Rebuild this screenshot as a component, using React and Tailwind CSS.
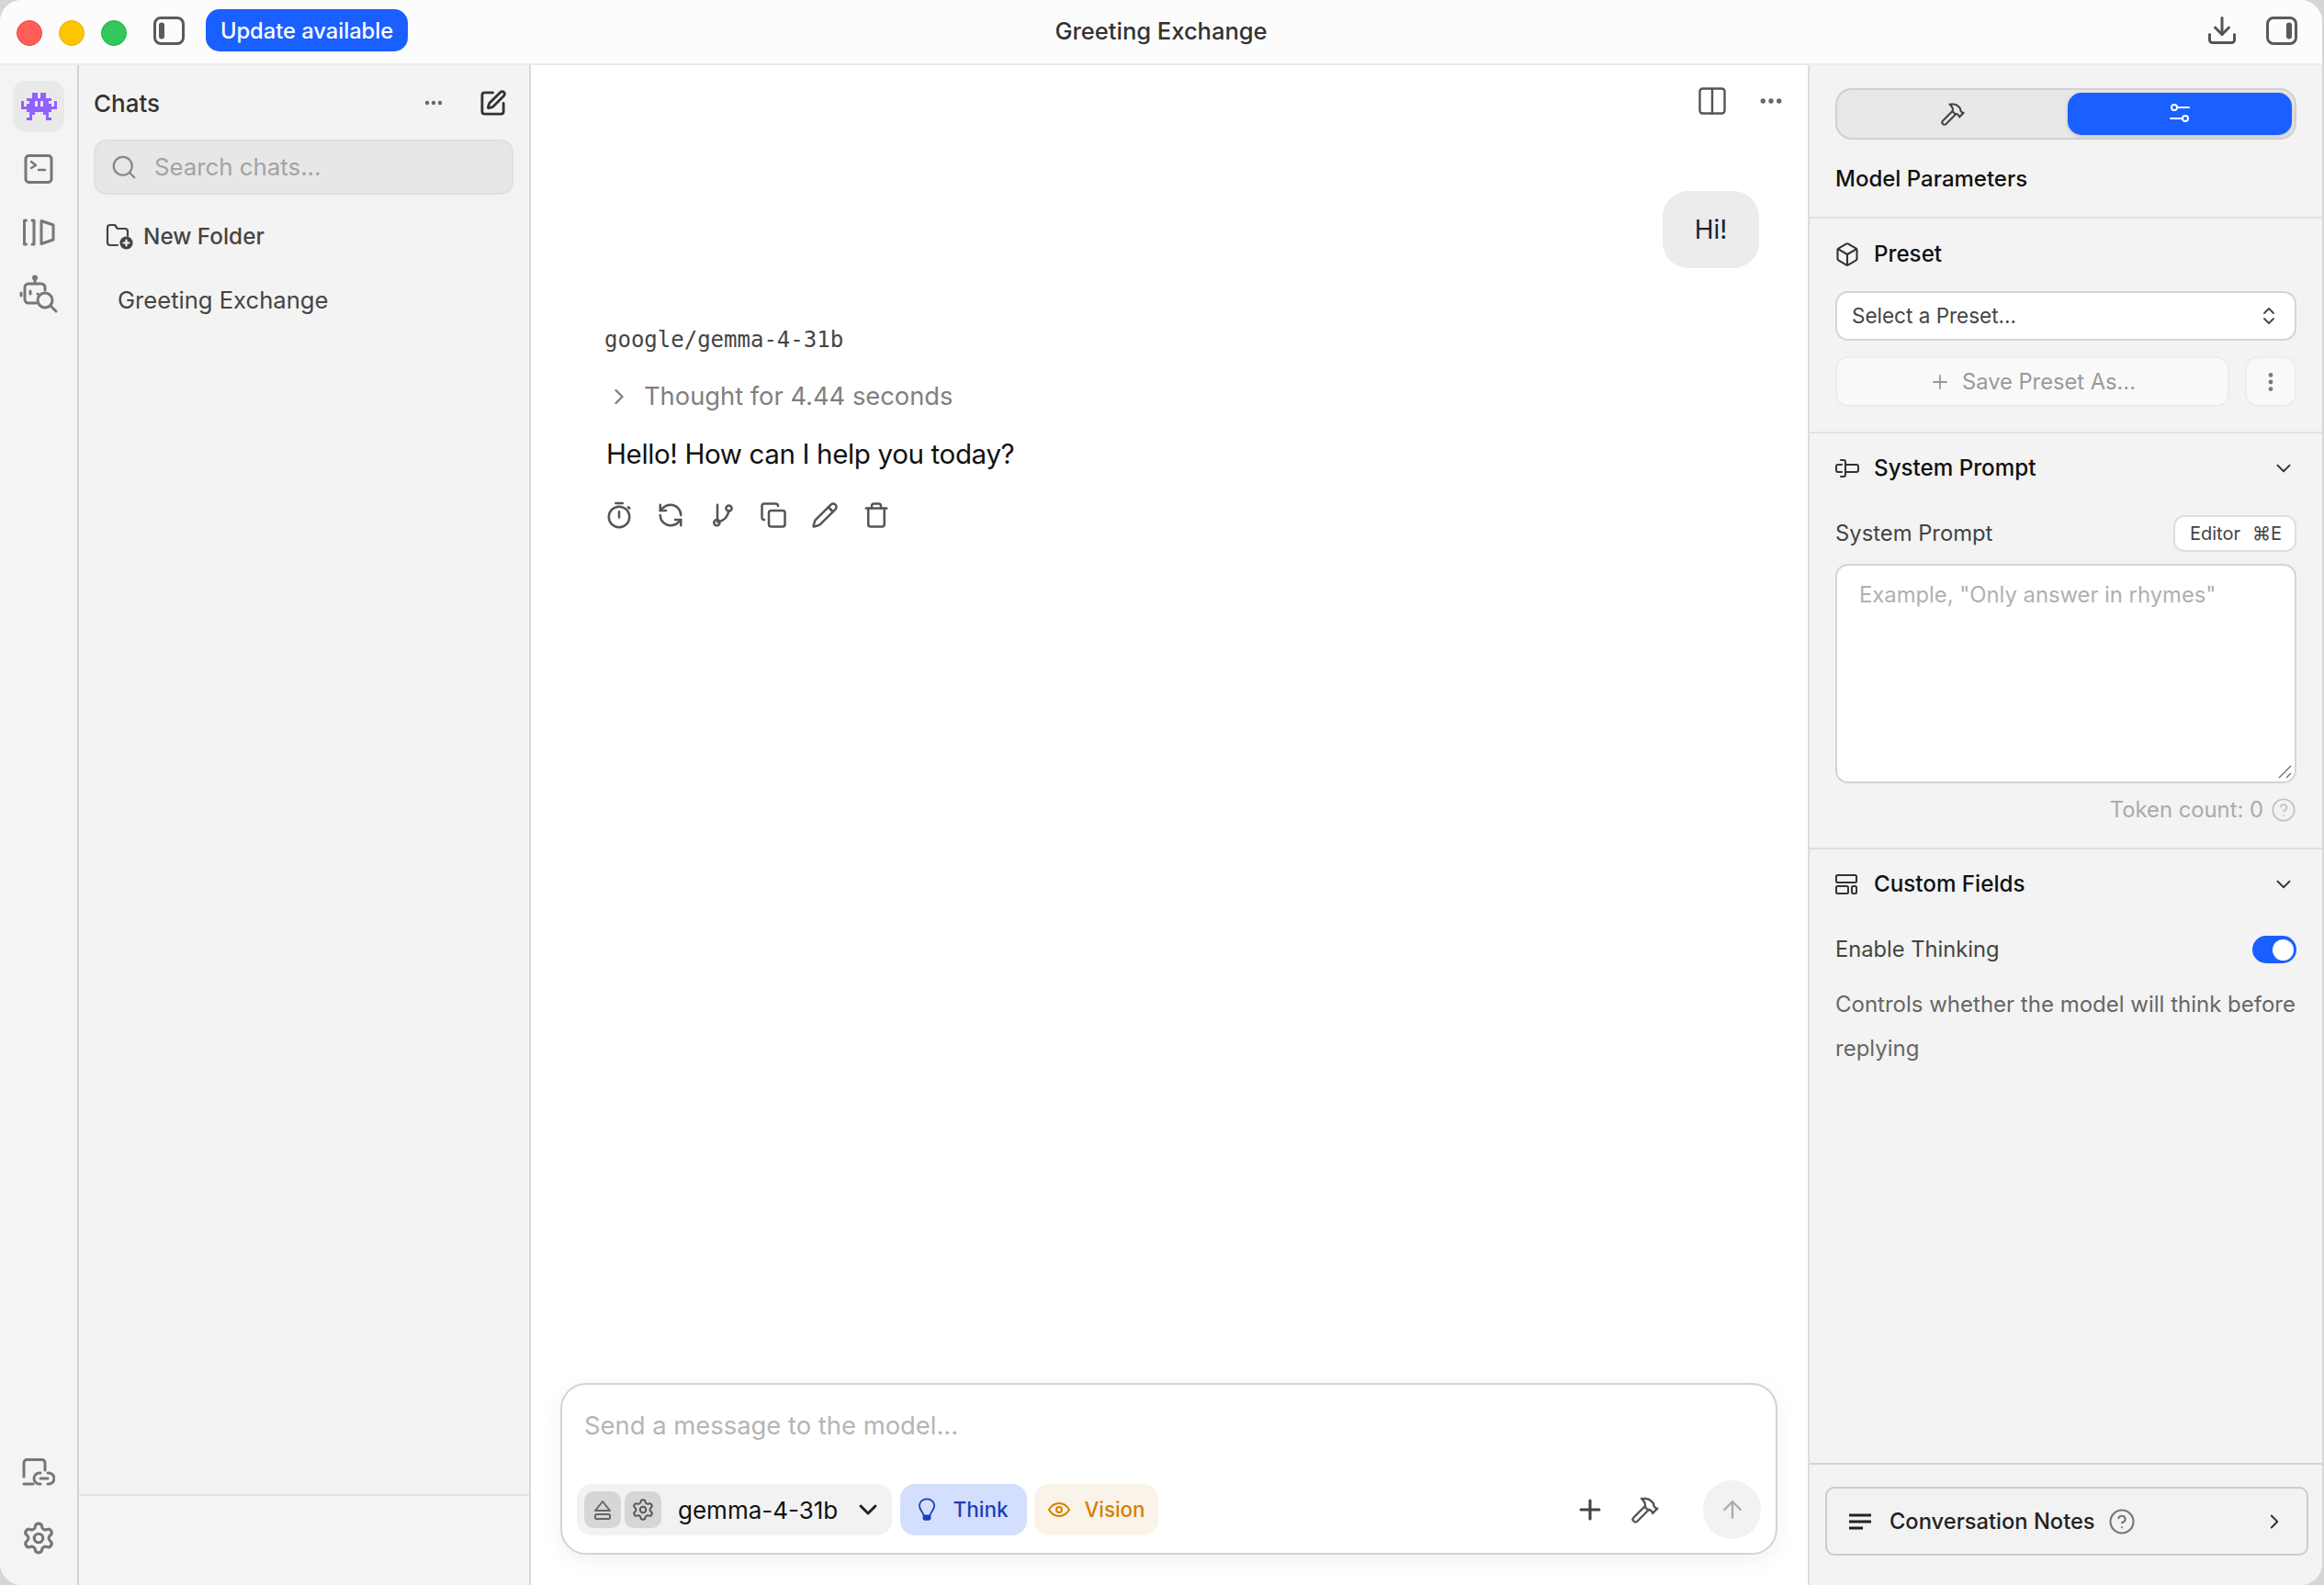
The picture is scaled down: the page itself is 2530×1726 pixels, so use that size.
import React from "react";
import { Search, SquarePen, Ellipsis, RefreshCcw, Copy, Pencil, Trash, ChevronRight, ChevronDown, ChevronsUpDown, Plus, EllipsisVertical, Hammer, Box, ArrowUp, CircleHelp, Download, Columns2, Settings } from "lucide-react";

const invader = [
  "....XX.XX....",
  "....XX.XX....",
  "..XXXXXXXXX..",
  "X..XX.X.XX..X",
  "X.XXX.X.XXX.X",
  "XXXXXXXXXXXXX",
  "..XXXXXXXXX..",
  "...XX...XX...",
  "...X.....X...",
  "..XX.....XX..",
];
const Invader = () => (
  <svg width="39" height="30" viewBox="0 0 13 10" fill="#9061ff" shapeRendering="crispEdges">
    {invader.flatMap((r, y) => [...r].map((c, x) => (c === "X" ? <rect key={x + "-" + y} x={x} y={y} width="1" height="1" /> : null)))}
  </svg>
);

const PanelToggle = ({ right }) => (
  <svg width="34" height="31" viewBox="0 0 34 31" fill="none" className="shrink-0">
    <rect x="1.5" y="1.5" width="31" height="28" rx="6.5" stroke="#5a5a5a" strokeWidth="3" />
    <rect x={right ? 22 : 6} y="6.5" width="6" height="18" rx="3" fill="#5a5a5a" />
  </svg>
);

const Section = ({ icon, title, chevron }) => (
  <div className="flex items-center h-[32px]">
    <span className="w-[42px] flex items-center text-[#333]">{icon}</span>
    <span className="text-[24.2px] font-medium text-[#111]">{title}</span>
    {chevron && <ChevronDown size={26} strokeWidth={1.7} className="ml-auto mr-[1px] text-[#333]" />}
  </div>
);

export default function App() {
  return (
    <div className="w-[2530px] h-[1726px] bg-[#d6d6d4] overflow-hidden font-['Inter',sans-serif]">
      <div className="w-[2528px] h-[1726px] rounded-[24px] overflow-hidden flex flex-col bg-white">
        {/* Title bar */}
        <div className="h-[71px] shrink-0 grid grid-cols-[1fr_auto_1fr] items-center bg-[#fcfcfc] border-b-2 border-[#ebebeb]">
          <div className="flex items-center pl-[18px]">
            <span className="w-[28px] h-[28px] mt-[3px] rounded-full bg-[#ff5f57] border border-[#e5443e]" />
            <span className="w-[28px] h-[28px] mt-[3px] ml-[18px] rounded-full bg-[#fdc500] border border-[#e6b000]" />
            <span className="w-[28px] h-[28px] mt-[3px] ml-[18px] rounded-full bg-[#31c759] border border-[#20b046]" />
            <span className="ml-[29px] -mt-[3px] flex"><PanelToggle /></span>
            <button className="ml-[23px] -mt-[3px] w-[220px] h-[46px] pt-[1px] rounded-[15px] bg-[#1a5fff] text-white text-[23.7px] font-medium flex items-center justify-center">Update available</button>
          </div>
          <div className="text-[25.5px] font-medium text-[#333] -mt-[1px]">Greeting Exchange</div>
          <div className="flex items-center justify-end pr-[27px] -mt-[3px]">
            <Download size={36} strokeWidth={2} className="text-[#555]" />
            <span className="ml-[30px] flex"><PanelToggle right /></span>
          </div>
        </div>

        <div className="flex flex-1 min-h-0">
          {/* Rail */}
          <div className="w-[86px] shrink-0 bg-[#f4f4f4] border-r-2 border-[#d2d2d2] flex flex-col items-center">
            <div className="mt-[17px] w-[56px] h-[56px] rounded-[14px] bg-[#e9e9e9] flex items-center justify-center"><Invader /></div>
            <div className="mt-[23px] text-[#777]">
              <svg width="34" height="34" viewBox="0 0 34 34" fill="none" stroke="currentColor" strokeWidth="3" strokeLinecap="round" strokeLinejoin="round">
                <rect x="3" y="2.5" width="28" height="29" rx="3.5" />
                <path d="M9 9l5 4-5 3M17 18h7" strokeWidth="2.4" />
              </svg>
            </div>
            <div className="mt-[36px] text-[#777]">
              <svg width="36" height="32" viewBox="0 0 36 32" fill="none" stroke="currentColor" strokeWidth="3" strokeLinecap="round" strokeLinejoin="round">
                <path d="M4.500 3H2.500v26h2M11 3h2v26h-2M21 3.500l13 4.500v16l-13 4.500z" />
              </svg>
            </div>
            <div className="mt-[30px] text-[#777]">
              <svg width="42" height="42" viewBox="0 0 42 42" fill="none" stroke="currentColor" strokeWidth="3" strokeLinecap="round" strokeLinejoin="round">
                <path d="M17 9V4" />
                <circle cx="17" cy="3.5" r="1.5" fill="currentColor" />
                <path d="M18 31H10a4 4 0 0 1-4-4V14a4 4 0 0 1 4-4h14a4 4 0 0 1 4 4v3" />
                <path d="M2 20v3M12 18v3M20 21h0" />
                <circle cx="28" cy="28" r="8" />
                <path d="M34 34l6 6" />
              </svg>
            </div>
            <div className="mt-auto text-[#777]">
              <svg width="36" height="30" viewBox="0 0 36 30" fill="none" stroke="currentColor" strokeWidth="3" strokeLinecap="round" strokeLinejoin="round">
                <path d="M2 20V5a3.500 3.500 0 0 1 3.500-3.500h16A3.500 3.500 0 0 1 25 5v8M2 28h10" />
                <path d="M20 16h-1a6 6 0 0 0 0 12h1M28 16h1a6 6 0 0 1 0 12h-1M20 22h8" />
              </svg>
            </div>
            <div className="mt-[38px] mb-[32px]"><Settings size={38} strokeWidth={2} className="text-[#777]" /></div>
          </div>

          {/* Chats sidebar */}
          <div className="w-[492px] shrink-0 bg-[#f3f3f3] border-r-2 border-[#d8d8d8] flex flex-col">
            <div className="flex-1 min-h-0 pl-[16px] pr-[17px]">
              <div className="mt-[25px] flex items-center h-[32px]">
                <span className="text-[26px] font-medium text-[#333]">Chats</span>
                <Ellipsis size={24} strokeWidth={2.4} className="ml-auto mr-[-2px] text-[#666]" />
                <SquarePen size={31} strokeWidth={2.2} className="ml-[39px] mr-[7px] text-[#333]" />
              </div>
              <div className="mt-[24px] w-[457px] h-[60px] rounded-[14px] bg-[#e7e7e7] border-2 border-[#e0e0e0] flex items-center pl-[16px]">
                <Search size={30} strokeWidth={1.8} className="text-[#888]" />
                <span className="ml-[18px] text-[25.8px] text-[#a3a3a3]">Search chats...</span>
              </div>
              <div className="mt-[30px] ml-[13px] flex items-center h-[30px]">
                <svg width="30" height="30" viewBox="0 0 30 30" fill="none" stroke="#444" strokeWidth="2.2" strokeLinecap="round" strokeLinejoin="round" className="shrink-0">
                  <path d="M13 25H5a3 3 0 0 1-3-3V6a3 3 0 0 1 3-3h5l3 4h8a3 3 0 0 1 3 3v5" />
                  <circle cx="22.500" cy="22.500" r="6" fill="#444" stroke="#444" />
                  <path d="M22.500 19.500v6M19.500 22.500h6" stroke="#f3f3f3" />
                </svg>
                <span className="ml-[11px] text-[24.3px] font-medium text-[#444]">New Folder</span>
              </div>
              <div className="mt-[39px] ml-[26px] text-[25.6px] text-[#444] leading-[32px]">Greeting Exchange</div>
            </div>
            <div className="h-[99px] shrink-0 border-t-2 border-[#e4e4e4] bg-[#f5f5f5]" />
          </div>

          {/* Main */}
          <div className="flex-1 min-w-0 bg-white flex flex-col pl-[32px] pr-[33px]">
            <div className="mt-[21px] h-[36px] flex items-center justify-end -mr-[3px]">
              <Columns2 size={36} strokeWidth={1.6} className="text-[#555]" />
              <Ellipsis size={30} strokeWidth={2.3} className="ml-[31px] -mr-[5px] text-[#666]" />
            </div>
            <div className="mt-[80px] flex justify-end pr-[20px]">
              <div className="w-[105px] h-[84px] rounded-[28px] bg-[#ececec] flex items-center justify-center text-[28px] text-[#222]">Hi!</div>
            </div>
            <div className="mt-[60px] pl-[48px] font-['DejaVu_Sans_Mono',monospace] text-[24px] leading-[36px] text-[#444]">google/gemma-4-31b</div>
            <div className="mt-[26px] ml-[51px] flex items-center h-[36px] text-[#808080]">
              <ChevronRight size={28} strokeWidth={2} className="-ml-[1px] text-[#808080]" />
              <span className="ml-[13px] text-[27.3px]">Thought for 4.44 seconds</span>
            </div>
            <div className="mt-[26px] ml-[50px] text-[29.5px] tracking-[-0.35px] leading-[36px] text-[#111]">Hello! How can I help you today?</div>
            <div className="mt-[34px] ml-[49px] flex items-center text-[#555] gap-[26px]">
              <svg width="30" height="30" viewBox="0 0 24 24" fill="none" stroke="currentColor" strokeWidth="2" strokeLinecap="round" strokeLinejoin="round" className="shrink-0">
                <circle cx="12" cy="13.500" r="9" /><path d="M9 1.500h6M12 9v5M20 5l1 1" />
              </svg>
              <RefreshCcw size={30} strokeWidth={2} />
              <svg width="30" height="30" viewBox="0 0 24 24" fill="none" stroke="currentColor" strokeWidth="2" strokeLinecap="round" strokeLinejoin="round" className="shrink-0">
                <path d="M8 3v13M8 18c6-1 9-4 10-10" />
                <circle cx="7.500" cy="18.500" r="2.500" />
                <circle cx="18" cy="6" r="2.500" />
              </svg>
              <Copy size={30} strokeWidth={2} />
              <Pencil size={30} strokeWidth={2} />
              <Trash size={30} strokeWidth={2} />
            </div>
            <div className="mt-auto mb-[33px] h-[187px] rounded-[28px] border-2 border-[#d4d4d4] bg-white shadow-[0_6px_24px_rgba(0,0,0,0.06)] flex flex-col">
              <div className="mt-[26px] ml-[24px] text-[27.4px] leading-[36px] text-[#b5b5b5]">Send a message to the model...</div>
              <div className="mt-auto mb-[15px] flex items-center pl-[16px] pr-[16px]">
                <div className="w-[343px] h-[56px] rounded-[16px] bg-[#f2f2f2] flex items-center pl-[8px]">
                  <span className="w-[40px] h-[40px] rounded-[10px] bg-[#d6d6d6] flex items-center justify-center">
                    <svg width="24" height="24" viewBox="0 0 24 24" fill="none" stroke="#666" strokeWidth="2" strokeLinejoin="round"><path d="M12 3l8 10H4z" /><rect x="4" y="17" width="16" height="5" rx="1.500" /></svg>
                  </span>
                  <span className="ml-[4px] w-[40px] h-[40px] rounded-[10px] bg-[#d6d6d6] flex items-center justify-center"><Settings size={26} strokeWidth={1.8} className="text-[#555]" /></span>
                  <span className="ml-[18px] text-[26px] whitespace-nowrap text-[#111]">gemma-4-31b</span>
                  <ChevronDown size={32} strokeWidth={2.2} className="ml-auto mr-[10px] text-[#222]" />
                </div>
                <div className="ml-[9px] w-[138px] h-[56px] rounded-[16px] bg-[#d3dffc] flex items-center justify-center text-[#1a3fc0]">
                  <svg width="18" height="26" viewBox="0 0 20 28" fill="none" stroke="currentColor" strokeWidth="2" strokeLinecap="round" className="shrink-0">
                    <path d="M6 21c0-4-5-6-5-12a9 8 0 0 1 18 0c0 6-5 8-5 12z" />
                    <rect x="6" y="22" width="8" height="4" rx="2" fill="currentColor" />
                  </svg>
                  <span className="ml-[19px] text-[22.5px] font-medium">Think</span>
                </div>
                <div className="ml-[8px] w-[135px] h-[56px] rounded-[16px] bg-[#f9f3ea] flex items-center justify-center text-[#d68000]">
                  <svg width="24" height="18" viewBox="0 0 24 18" fill="none" stroke="currentColor" strokeWidth="2" className="shrink-0">
                    <path d="M1 9c3-5 7-7 11-7s8 2 11 7c-3 5-7 7-11 7S4 14 1 9z" />
                    <circle cx="12" cy="9" r="3" />
                  </svg>
                  <span className="ml-[16px] text-[22.3px] font-medium">Vision</span>
                </div>
                <Plus size={34} strokeWidth={2.2} className="ml-auto text-[#444]" />
                <Hammer size={32} strokeWidth={1.8} className="ml-[27px] text-[#555]" />
                <span className="ml-[47px] w-[63px] h-[64px] rounded-full bg-[#f2f2f2] flex items-center justify-center"><ArrowUp size={30} strokeWidth={1.8} className="text-[#aaa]" /></span>
              </div>
            </div>
          </div>

          {/* Right panel */}
          <div className="w-[560px] shrink-0 bg-[#f3f3f3] border-l-2 border-[#dcdcdc] flex flex-col">
            <div className="h-[167px] shrink-0 border-b-2 border-[#e2e2e2] px-[28px]">
              <div className="mt-[25px] h-[56px] rounded-[18px] bg-[#e8e8e8] border-2 border-[#d0d0d0] flex items-center pr-[3px]">
                <div className="flex-1 flex justify-center"><Hammer size={28} strokeWidth={1.8} className="text-[#444]" /></div>
                <div className="w-[244px] h-[46px] rounded-[15px] bg-[#1a5fff] shadow-[0_1px_4px_rgba(0,0,0,0.2)] flex items-center justify-center">
                  <svg width="24" height="24" viewBox="0 0 24 24" fill="none" stroke="white" strokeWidth="2" strokeLinecap="round"><circle cx="6" cy="5" r="3" /><path d="M10 5h12M2 17h12" /><circle cx="18" cy="17" r="3" /></svg>
                </div>
              </div>
              <div className="mt-[27px] text-[24px] font-medium text-[#111] leading-[32px]">Model Parameters</div>
            </div>
            <div className="h-[234px] shrink-0 border-b-2 border-[#e2e2e2] px-[28px] pt-[23px]">
              <Section title="Preset" icon={<Box size={28} strokeWidth={1.8} className="-ml-[1px]" />} />
              <div className="mt-[24px] h-[54px] rounded-[14px] bg-white border-2 border-[#d4d4d4] flex items-center pl-[16px] pr-[16px]">
                <span className="text-[22.5px] text-[#444]">Select a Preset...</span>
                <ChevronsUpDown size={24} strokeWidth={1.8} className="ml-auto text-[#444]" />
              </div>
              <div className="mt-[17px] flex gap-[17px]">
                <div className="flex-1 h-[55px] rounded-[14px] bg-[#f9f9f9] border-2 border-[#ececec] flex items-center justify-center text-[#999]">
                  <Plus size={24} strokeWidth={1.8} />
                  <span className="ml-[12px] text-[23.7px]">Save Preset As...</span>
                </div>
                <div className="w-[56px] h-[55px] rounded-[14px] bg-[#f9f9f9] border-2 border-[#ececec] flex items-center justify-center text-[#777]"><EllipsisVertical size={26} strokeWidth={2.4} /></div>
              </div>
            </div>
            <div className="h-[453px] shrink-0 border-b-2 border-[#dedede] px-[28px] pt-[22px]">
              <Section title="System Prompt" chevron icon={
                <svg width="26" height="22" viewBox="0 0 26 22" fill="none" stroke="currentColor" strokeWidth="2" strokeLinecap="round" strokeLinejoin="round">
                  <path d="M6 2h3M9 2c1 0 2 1 2 2v14c0 1-1 2-2 2H6M12 7h11a2 2 0 0 1 2 2v4a2 2 0 0 1-2 2H12M7 7H3a2 2 0 0 0-2 2v4a2 2 0 0 0 2 2h4" />
                </svg>} />
              <div className="mt-[35px] flex items-center justify-between h-[40px]">
                <span className="text-[23.8px] text-[#444]">System Prompt</span>
                <span className="w-[134px] h-[40px] rounded-[12px] bg-white border-2 border-[#dedede] flex items-center pl-[16px] text-[20px] text-[#444]">Editor<span className="ml-[13px]">⌘E</span></span>
              </div>
              <div className="mt-[13px] relative h-[239px] rounded-[14px] bg-white border-2 border-[#d4d4d4] pl-[24px] pt-[16px] text-[23.8px] leading-[32px] text-[#b0b0b0]">
                Example, "Only answer in rhymes"
                <svg width="16" height="16" viewBox="0 0 16 16" stroke="#666" strokeWidth="1.2" className="absolute right-[2px] bottom-[2px]"><path d="M1 14L14 1M9 14l5-5" /></svg>
              </div>
              <div className="mt-[14px] flex items-center justify-end h-[30px] text-[#aaa]">
                <span className="text-[23.8px]">Token count: 0</span>
                <CircleHelp size={28} strokeWidth={1.6} className="ml-[8px] text-[#c4c4c4]" />
              </div>
            </div>
            <div className="flex-1 min-h-0 px-[28px] pt-[22px]">
              <Section title="Custom Fields" chevron icon={
                <svg width="24" height="22" viewBox="0 0 24 22" fill="none" stroke="currentColor" strokeWidth="2" strokeLinejoin="round">
                  <rect x="1" y="1" width="22" height="8" rx="1.500" /><rect x="1" y="13" width="13" height="8" rx="1.500" /><rect x="18" y="13" width="5" height="8" rx="1.500" />
                </svg>} />
              <div className="mt-[39px] flex items-center justify-between h-[32px]">
                <span className="text-[23.7px] text-[#444]">Enable Thinking</span>
                <span className="w-[48px] h-[30px] rounded-full bg-[#1a5fff] flex items-center justify-end pr-[3px]"><span className="w-[23px] h-[23px] rounded-full bg-white" /></span>
              </div>
              <div className="mt-[20px] text-[24px] leading-[48px] text-[#666] whitespace-nowrap">Controls whether the model will think before<br />replying</div>
            </div>
            <div className="h-[133px] shrink-0 border-t-2 border-[#d4d4d4] pl-[17px] pr-[15px] pt-[24px]">
              <div className="h-[75px] rounded-[10px] bg-[#f2f2f2] border-2 border-[#cccccc] flex items-center pl-[23px] pr-[22px]">
                <svg width="26" height="18" viewBox="0 0 26 18" stroke="#222" strokeWidth="3" fill="none" className="shrink-0"><path d="M1 2h24M1 9h24M1 16h15" /></svg>
                <span className="ml-[19px] text-[23.7px] font-medium text-[#222]">Conversation Notes</span>
                <CircleHelp size={30} strokeWidth={1.7} className="ml-[14px] text-[#777]" />
                <ChevronRight size={26} strokeWidth={1.8} className="ml-auto text-[#333]" />
              </div>
            </div>
          </div>
        </div>
      </div>
    </div>
  );
}
